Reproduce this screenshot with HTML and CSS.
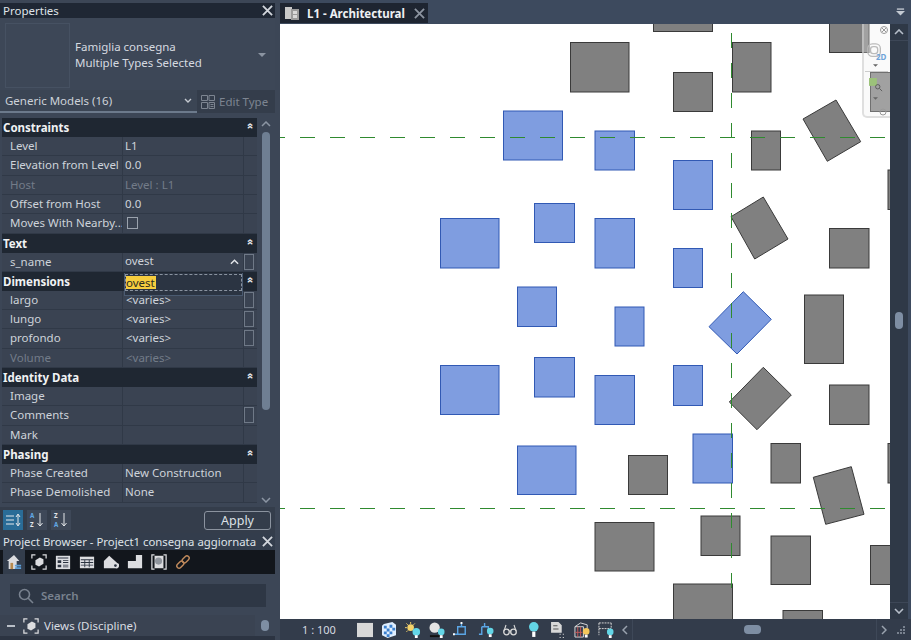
FILE: index.html
```html
<!DOCTYPE html>
<html lang="en">
<head>
<meta charset="utf-8">
<title>L1 - Architectural</title>
<link rel="stylesheet" href="styles.css">
</head>
<body>
<div class="app">
  <aside class="left">
    <header class="title props-title"><span>Properties</span>
      <svg class="close" viewBox="0 0 12 12"><path d="M1 1l10 10M11 1L1 11"/></svg>
    </header>
    <section class="selector">
      <div class="preview"></div>
      <div class="type-name"><div>Famiglia consegna</div><div>Multiple Types Selected</div></div>
      <svg class="sel-arrow" viewBox="0 0 8 4"><path d="M0 0h8L4 4z"/></svg>
    </section>
    <section class="filter">
      <div class="filter-sel"><span>Generic Models (16)</span>
        <svg class="chev-down" viewBox="0 0 8 5"><path d="M1 1l3 3 3-3"/></svg>
      </div>
      <div class="edit-type">
        <svg class="edit-icon" viewBox="0 0 14 14"><path d="M.5.5h6v5h-6zM.5 7.5h6v6h-6zM8 .5h5.500v5H8zM8 7.500h5.500v6H8zM9.500 9.500h3M9.500 11.500h3"/></svg>
        <span>Edit Type</span>
      </div>
    </section>
    <section class="grid-wrap">
      <div class="table">
        <div class="head"><span>Constraints</span><i class="dbl">»</i></div>
        <div class="row"><span>Level</span><span>L1</span><span></span></div>
        <div class="row"><span>Elevation from Level</span><span>0.0</span><span></span></div>
        <div class="row off"><span>Host</span><span>Level : L1</span><span></span></div>
        <div class="row"><span>Offset from Host</span><span>0.0</span><span></span></div>
        <div class="row"><span>Moves With Nearby...</span><span><b class="check"></b></span><span></span></div>
        <div class="head"><span>Text</span><i class="dbl">»</i></div>
        <div class="row"><span>s_name</span><span class="with-chev">ovest<svg class="chev-up" viewBox="0 0 10 6"><path d="M1 5l4-4 4 4"/></svg></span><span class="cell-btn"><b></b></span></div>
        <div class="head head-edit"><span>Dimensions</span><i class="dbl">»</i>
          <div class="editor"><div class="editor-in"><mark>ovest</mark></div></div>
        </div>
        <div class="row"><span>largo</span><span class="var">&lt;varies&gt;</span><span class="cell-btn"><b></b></span></div>
        <div class="row"><span>lungo</span><span class="var">&lt;varies&gt;</span><span class="cell-btn"><b></b></span></div>
        <div class="row"><span>profondo</span><span class="var">&lt;varies&gt;</span><span class="cell-btn"><b></b></span></div>
        <div class="row off"><span>Volume</span><span class="var">&lt;varies&gt;</span><span></span></div>
        <div class="head"><span>Identity Data</span><i class="dbl">»</i></div>
        <div class="row"><span>Image</span><span></span><span></span></div>
        <div class="row"><span>Comments</span><span></span><span class="cell-btn"><b></b></span></div>
        <div class="row"><span>Mark</span><span></span><span></span></div>
        <div class="head"><span>Phasing</span><i class="dbl">»</i></div>
        <div class="row"><span>Phase Created</span><span>New Construction</span><span></span></div>
        <div class="row"><span>Phase Demolished</span><span>None</span><span></span></div>
      </div>
      <div class="grid-scroll">
        <svg class="sc-arrow" viewBox="0 0 10 6"><path d="M1 5l4-4 4 4"/></svg>
        <div class="grid-track"><div class="grid-thumb"></div></div>
        <svg class="sc-arrow" viewBox="0 0 10 6"><path d="M1 1l4 4 4-4"/></svg>
      </div>
    </section>
    <section class="prop-tools">
      <button class="sort active"><svg viewBox="0 0 16 14"><path d="M1 3h8M1 7h8M1 11h8M13 2v10M11 4l2-3 2 3M11 10l2 3 2-3"/></svg></button>
      <button class="sort"><svg viewBox="0 0 16 16"><text x="1" y="6" class="az blue-l">A</text><text x="1" y="14.500" class="az">Z</text><path d="M11 1v13M8.500 11l2.500 3 2.500-3"/></svg></button>
      <button class="sort"><svg viewBox="0 0 16 16"><text x="1" y="6" class="az">Z</text><text x="1" y="14.500" class="az blue-l">A</text><path d="M11 1v13M8.500 11l2.500 3 2.500-3"/></svg></button>
      <button class="apply">Apply</button>
    </section>
    <header class="title browser-title"><span>Project Browser - Project1 consegna aggiornata</span>
      <svg class="close" viewBox="0 0 12 12"><path d="M1 1l10 10M11 1L1 11"/></svg>
    </header>
    <nav class="browser-tabs">
      <span class="b-tab on"><svg viewBox="0 0 18 18"><path class="ic-w" d="M9 1L1 8h2v9h9V8h3z"/><path class="ic-o" d="M5 10h3v7H5z"/><path class="ic-b" d="M10 12h7v2h-7zM10 15h7v2h-7z"/></svg></span>
      <span class="b-tab"><svg viewBox="0 0 18 18"><path class="ic-l" d="M1 5V1h4M13 1h4v4M17 13v4h-4M5 17H1v-4"/><path class="ic-w" d="M5 7l5-3 4 2v5l-5 3-4-2z"/></svg></span>
      <span class="b-tab"><svg viewBox="0 0 18 18"><path class="ic-w" d="M1 2h16v15H1z"/><path class="ic-d" d="M3 4h12v1H3zM3 7h4v3H3zM9 7h6v1H9zM9 9h6v1H9zM3 12h4v3H3zM9 12h6v1H9zM9 14h6v1H9z"/></svg></span>
      <span class="b-tab"><svg viewBox="0 0 18 16"><path class="ic-w" d="M1 2h16v13H1z"/><path class="ic-d" d="M2 5h14v1H2zM2 8h14v1H2zM2 11h14v1H2zM6 5h1v9H6zM11 5h1v9h-1z"/></svg></span>
      <span class="b-tab"><svg viewBox="0 0 18 18"><path class="ic-w" d="M1 8l6-6 9 8a3 3 0 0 1-2 6H1z"/><circle class="ic-d" cx="14" cy="13" r="1.500"/></svg></span>
      <span class="b-tab"><svg viewBox="0 0 18 18"><path class="ic-w" d="M10 1h7v15H1V8h9z"/></svg></span>
      <span class="b-tab"><svg viewBox="0 0 18 18"><path class="ic-l" d="M4 1H1v16h3M14 1h3v16h-3"/><path class="ic-w" d="M4 2h10v14H4z"/><circle class="ic-g" cx="8.500" cy="8" r="4"/></svg></span>
      <span class="b-tab"><svg viewBox="0 0 18 18"><g class="ic-link"><rect x="1.500" y="9.500" width="9" height="5" rx="2.500" transform="rotate(-45 6 12)"/><rect x="7.500" y="3.500" width="9" height="5" rx="2.500" transform="rotate(-45 12 6)"/></g></svg></span>
    </nav>
    <div class="search-wrap">
      <div class="search">
        <svg viewBox="0 0 16 16"><circle cx="6.500" cy="6.500" r="5"/><path d="M10 10l5 5"/></svg>
        <span>Search</span>
      </div>
    </div>
    <div class="tree">
      <div class="tree-row">
        <span class="minus"></span>
        <svg class="tree-ic" viewBox="0 0 18 18"><path class="ic-l" d="M1 5V1h4M13 1h4v4M17 13v4h-4M5 17H1v-4"/><path class="ic-w" d="M5 7l5-3 4 2v5l-5 3-4-2z"/></svg>
        <span>Views (Discipline)</span>
      </div>
      <div class="tree-scroll"><div class="tree-thumb"></div></div>
    </div>
  </aside>

  <main class="right">
    <div class="tabbar">
      <div class="tab">
        <svg class="tab-ic" viewBox="0 0 14 14"><path d="M0 1h7v12H0z" fill="#c9c9c9"/><path d="M6 3h8v11H6z" fill="#9b9b9b"/><path d="M8 5h4v3H8zM8 9h4v3H8z" fill="#d9d9d9"/></svg>
        <span class="tab-label">L1 - Architectural</span>
        <svg class="close tab-close" viewBox="0 0 12 12"><path d="M1 1l10 10M11 1L1 11"/></svg>
      </div>
      <svg class="tab-menu" viewBox="0 0 10 8"><path d="M1 0h8v1.500H1z"/><path d="M0 3h10L5 8z"/></svg>
    </div>
    <div class="view">
      <div class="canvas">
        <svg class="drawing" viewBox="280 24 610 595" width="610" height="595">
          <g class="g">
            <rect x="570.500" y="42.500" width="58.500" height="49.500"/>
            <rect x="653.500" y="10" width="59" height="21.500"/>
            <rect x="673.500" y="72.500" width="39" height="39"/>
            <rect x="732.500" y="42.500" width="38.500" height="49.500"/>
            <rect x="829.500" y="10" width="39.500" height="42.500"/>
            <rect x="751.500" y="131" width="29" height="39"/>
            <polygon points="836,100 860.700,141.700 827.300,161.300 803,119"/>
            <polygon points="763.300,197 788,239 754.700,259 731,216.700"/>
            <rect x="829.500" y="228.500" width="39.500" height="39.500"/>
            <rect x="804.500" y="295" width="39" height="68.500"/>
            <polygon points="763.300,367.300 791.300,395 757,429.700 729.300,402"/>
            <rect x="829.500" y="385" width="39.500" height="39.500"/>
            <rect x="771" y="443.500" width="29.500" height="39.500"/>
            <rect x="628.500" y="455.500" width="39" height="39"/>
            <polygon points="851.300,466.700 864,514.300 825.700,524.300 813.300,477.300"/>
            <rect x="888" y="170" width="20" height="39.500"/>
            <rect x="888" y="443.500" width="20" height="39.500"/>
            <rect x="595" y="522.500" width="59" height="48.500"/>
            <rect x="701" y="516" width="39" height="39.500"/>
            <rect x="771" y="536" width="39.500" height="48.500"/>
            <rect x="870.500" y="545.500" width="30" height="39"/>
            <rect x="673.500" y="584" width="59" height="50"/>
            <rect x="783" y="610.500" width="39.500" height="30"/>
            <rect x="870.500" y="72.500" width="39" height="39"/>
          </g>
          <g class="b">
            <rect x="503.500" y="111" width="59" height="49"/>
            <rect x="595" y="131" width="39.500" height="39"/>
            <rect x="673.500" y="160.500" width="39" height="49"/>
            <rect x="534.500" y="203.500" width="40" height="39"/>
            <rect x="440.500" y="218.500" width="58.500" height="49.500"/>
            <rect x="595" y="218.500" width="39.500" height="49.500"/>
            <rect x="673.500" y="248.500" width="29" height="39"/>
            <rect x="517.500" y="287" width="39" height="39.500"/>
            <rect x="615" y="307" width="29" height="39"/>
            <rect x="440.500" y="365.500" width="58.500" height="49"/>
            <rect x="534.500" y="357.500" width="40" height="39.500"/>
            <rect x="595" y="375.500" width="39.500" height="49"/>
            <rect x="673.500" y="365.500" width="29" height="40"/>
            <rect x="517.500" y="446" width="58.500" height="48.500"/>
            <rect x="693" y="434" width="39.500" height="49"/>
            <polygon points="743.300,291.700 771.300,319.300 737,354 709,326.700"/>
          </g>
          <g class="dash">
            <path d="M270 137.500h15m15 0h15m15 0h15m15 0h15m15 0h15m15 0h15m15 0h15m15 0h15m15 0h15m15 0h15m15 0h15m15 0h15m15 0h15m15 0h15m15 0h15m15 0h15m15 0h15m15 0h15m15 0h15m15 0h15m15 0h15"/>
            <path d="M270 508.500h15m15 0h15m15 0h15m15 0h15m15 0h15m15 0h15m15 0h15m15 0h15m15 0h15m15 0h15m15 0h15m15 0h15m15 0h15m15 0h15m15 0h15m15 0h15m15 0h15m15 0h15m15 0h15m15 0h15m15 0h15"/>
            <path d="M731.500 33v15m0 15v15m0 15v15m0 15v15m0 15v15m0 15v15m0 15v15m0 15v15m0 15v15m0 15v15m0 15v15m0 15v15m0 15v15m0 15v15m0 15v15m0 15v15m0 15v15m0 15v15m0 15v15"/>
          </g>
        </svg>
        <div class="navbar">
          <svg class="nav-x" viewBox="0 0 8 8"><circle cx="4" cy="4" r="3.500"/><path d="M2 2l4 4M6 2L2 6"/></svg>
          <svg class="nav-wheel" viewBox="0 0 18 18"><rect x="1" y="1" width="14" height="14" rx="5"/><rect x="4" y="4" width="8" height="8" rx="3"/></svg>
          <span class="nav-2d">2D</span>
          <svg class="nav-down" viewBox="0 0 6 3"><path d="M0 0h6L3 3z"/></svg>
          <div class="nav-sep"></div>
          <svg class="nav-zoom" viewBox="0 0 16 16"><path d="M0 0h9v9H0z" fill="#9cc27a"/><circle cx="10" cy="10" r="2.500" fill="none" stroke="#555"/><path d="M12 12l3 3" stroke="#555"/></svg>
          <svg class="nav-down low" viewBox="0 0 6 3"><path d="M0 0h6L3 3z"/></svg>
          <svg class="nav-o" viewBox="0 0 8 8"><circle cx="4" cy="4" r="3"/></svg>
        </div>
      </div>
      <div class="vscroll">
        <div class="vbtn top"><svg viewBox="0 0 10 6"><path d="M1 5l4-4 4 4"/></svg></div>
        <div class="vtrack"><div class="vthumb"></div></div>
        <div class="vbtn bottom"><svg viewBox="0 0 10 6"><path d="M1 1l4 4 4-4"/></svg></div>
      </div>
    </div>
    <footer class="status">
      <span class="scale">1 : 100</span>
      <div class="status-icons">
        <svg viewBox="0 0 17 17"><rect x="0" y="1" width="17" height="15" fill="#d8d8d8"/></svg>
        <svg viewBox="0 0 15 17"><path d="M2 2l9-2 4 3v11l-9 3-6-3V4z" fill="#dfeeff"/><path d="M2 4h3v3H2zM8 3h3v3H8zM5 7h3v3H5zM11 6h3v3h-3zM2 10h3v3H2zM8 10h3v3H8zM5 13h3v3H5z" fill="#3a80d0"/></svg>
        <svg viewBox="0 0 17 17"><circle cx="6" cy="6" r="3.500" fill="#f5d36a"/><path d="M6 0v2M0 6h2M1.500 1.500l1.500 1.500M10.500 1.500L9 3M1.500 10.500L3 9" stroke="#f5d36a"/><circle cx="12" cy="10.500" r="4" fill="#63d5e6"/><path d="M10.500 14h3v3h-3z" fill="#fff"/></svg>
        <svg viewBox="0 0 17 17"><circle cx="6" cy="6" r="5.500" fill="#e4e4e4"/><path d="M1 14h11v2H1z" fill="#111"/><circle cx="13" cy="10.500" r="3.500" fill="#63d5e6"/><path d="M11.500 14h3v3h-3z" fill="#fff"/></svg>
        <svg viewBox="0 0 17 17"><path d="M5 5h8v8H5zM1 13h4M9 1v4" fill="none" stroke="#5ba6e6" stroke-width="1.500"/><path d="M0 12h2v2H0zM8 0h2v2H8z" fill="#fff"/></svg>
        <svg viewBox="0 0 17 17"><path d="M4 5h7v8M1 13h3V5M7 1v4" fill="none" stroke="#5ba6e6" stroke-width="1.500"/><circle cx="13" cy="9.500" r="3.500" fill="#63d5e6"/><path d="M11.500 13h3v3h-3z" fill="#fff"/></svg>
        <svg class="small" viewBox="0 0 14 12"><circle cx="3.500" cy="8" r="2.800" fill="none" stroke="#d8d8d8" stroke-width="1.300"/><circle cx="10.500" cy="8" r="2.800" fill="none" stroke="#d8d8d8" stroke-width="1.300"/><path d="M6 7h2M1 7l2-6M13 7l-2-6" stroke="#d8d8d8" stroke-width="1.100"/></svg>
        <svg viewBox="0 0 9 15"><circle cx="4.500" cy="4.500" r="4.500" fill="#63d5e6"/><path d="M3 9h3v5H3z" fill="#fff"/></svg>
        <svg viewBox="0 0 14 15"><path d="M1 0h7l3 3v7H1z" fill="#d8d8d8"/><path d="M3 3h4v1H3zM3 6h5v1H3z" fill="#555"/><path d="M9 11h1v1H9zM12 11h1v1h-1zM9 14h1v1H9zM12 14h1v1h-1z" fill="#ddd"/></svg>
        <svg viewBox="0 0 17 17"><path d="M1 5l6-4 7 2v4" fill="none" stroke="#ddd"/><path d="M1 5h9v11H1z" fill="none" stroke="#ddd"/><path d="M1 11h8M4 5v11M7 5v11" fill="none" stroke="#c85a5a"/><circle cx="13" cy="10" r="3.500" fill="#f4c65a"/><path d="M11.500 13.500h3v3h-3z" fill="#fff"/></svg>
        <svg viewBox="0 0 17 17"><path d="M1 1h13M1 7h13M1 1v13M14 1v6" fill="none" stroke="#ddd" stroke-dasharray="2 1"/><circle cx="13" cy="10.500" r="3.500" fill="#63d5e6"/><path d="M11.500 14h3v3h-3z" fill="#fff"/></svg>
      </div>
      <div class="hscroll">
        <svg class="hbtn" viewBox="0 0 6 10"><path d="M5 1L1 5l4 4"/></svg>
        <div class="htrack"><div class="hthumb"></div></div>
        <svg class="hbtn" viewBox="0 0 6 10"><path d="M1 1l4 4-4 4"/></svg>
      </div>
      <svg class="grip" viewBox="0 0 8 8"><path d="M6 0h2v2H6zM3 3h2v2H3zM6 3h2v2H6zM0 6h2v2H0zM3 6h2v2H3zM6 6h2v2H6z"/></svg>
    </footer>
  </main>
</div>
</body>
</html>
```
FILE: styles.css
```css
* { box-sizing: border-box; }
html, body { margin: 0; padding: 0; }
body {
  width: 911px;
  height: 640px;
  overflow: hidden;
  background: #3c4656;
  font-family: "Noto Sans", "Liberation Sans", sans-serif;
  font-size: 11.500px;
  color: #d6dae0;
}
svg { display: block; }
.app { display: flex; width: 911px; height: 640px; }

/* left column */
.left { width: 275px; height: 640px; display: flex; flex-direction: column; background: #3c4656; }
.title {
  display: flex;
  align-items: center;
  justify-content: space-between;
  color: #dfe3e8;
  padding: 0 2px 0 3px;
  white-space: nowrap;
}
.props-title { height: 15px; margin-top: 3px; background: #1f2734; }
.browser-title { height: 17px; background: #333d4c; font-size: 11.350px; }
.close { width: 11px; height: 11px; flex: none; fill: none; stroke: #d2d6dc; stroke-width: 2; }
.selector {
  height: 72px;
  display: flex;
  align-items: center;
  position: relative;
  padding: 4px 9px 2px 5px;
  background: #3d4757;
}
.preview { width: 65px; height: 65px; border: 1px solid #465162; margin-right: 5px; flex: none; }
.type-name { flex: 1; line-height: 16px; color: #d6dae0; }
.sel-arrow { width: 8px; height: 4px; fill: #8b94a1; }
.filter { height: 23px; display: flex; }
.filter-sel {
  width: 197px;
  display: flex;
  align-items: center;
  justify-content: space-between;
  padding: 0 5px;
  border-bottom: 2px solid #6c7a8c;
  background: #3b4554;
  color: #cdd2d9;
}
.chev-down { width: 8px; height: 5px; fill: none; stroke: #c5cad1; stroke-width: 1.400; }
.edit-type {
  flex: 1;
  display: flex;
  align-items: center;
  gap: 4px;
  padding-left: 4px;
  background: #343d4b;
  color: #7d8591;
}
.edit-icon { width: 14px; height: 14px; fill: none; stroke: #7d8591; }
.grid-wrap { display: flex; height: 389px; margin-top: 5px; padding-left: 2px; }
.table { width: 255px; height: 385px; }
.head {
  height: 18.900px;
  display: flex;
  align-items: center;
  justify-content: space-between;
  background: #1f2732;
  color: #f0f2f4;
  font-weight: 700;
  padding: 0 5px 0 1px;
  position: relative;
  line-height: 19px;
}
.dbl {
  font-style: normal;
  font-weight: 700;
  font-size: 10px;
  line-height: 10px;
  color: #e4e7eb;
  transform: rotate(-90deg);
  margin-top: -3px;
}
.row {
  height: 19.350px;
  display: grid;
  grid-template-columns: 121px 121px 13px;
  border-bottom: 1px solid #303947;
  background: #3a4352;
  color: #ced3da;
  line-height: 18.400px;
}
.row > span { display: block; white-space: nowrap; overflow: hidden; }
.row > span:first-child { padding-left: 8px; border-right: 1px solid #303947; }
.row > span:nth-child(2) { padding-left: 2px; border-right: 1px solid #303947; }
.off { color: #737c89; }
.var { padding-left: 3px !important; }
.with-chev { display: flex !important; align-items: center; justify-content: space-between; padding-right: 4px; }
.chev-up { width: 9px; height: 6px; fill: none; stroke: #e2e5e9; stroke-width: 1.600; }
.check { display: block; width: 11px; height: 12px; margin: 3px 0 0 2px; border: 1px solid #9aa2ad; }
.cell-btn b { display: block; width: 10px; height: 16px; margin: 1px 0 0 0; border: 1px solid #6f7987; }
.editor {
  position: absolute;
  left: 122px;
  top: 1px;
  width: 119px;
  height: 23px;
  z-index: 2;
  padding: 1px 0 4px;
  background: #2b3442;
  border: 1px solid #4a5a70;
  border-top: 0;
}
.editor-in { height: 17px; border: 1px dashed #8a93a0; display: flex; align-items: center; font-weight: 400; }
mark { background: #f6cd3e; color: #2a2a20; line-height: 13px; padding: 0 1px 0 0; }
.grid-scroll { width: 18px; display: flex; flex-direction: column; align-items: center; background: #3c4656; height: 385px; padding-top: 3px; }
.sc-arrow { width: 10px; height: 6px; fill: none; stroke: #8b95a3; stroke-width: 1.500; flex: none; }
.grid-track { flex: 1; width: 100%; padding: 5px 5px 0; }
.grid-thumb { width: 8px; height: 278px; border-radius: 4px; background: #6f7f93; }
.prop-tools { height: 26px; display: flex; align-items: center; padding: 0 4px 0 3px; gap: 4px; background: #343d4b; }
.sort {
  width: 20px;
  height: 20px;
  padding: 2px;
  border: 0;
  background: #3e4858;
  display: flex;
  align-items: center;
  justify-content: center;
}
.sort svg { width: 16px; height: 16px; fill: none; stroke: #e4e7ea; overflow: visible; }
.sort.active { background: #2a6c97; }
.az { font: 700 6.200px "Noto Sans", sans-serif; fill: #e4e7ea; stroke: none; }
.blue-l { fill: #62a8e6; }
.apply {
  margin-left: auto;
  width: 67px;
  height: 19px;
  border: 1px solid #8b939f;
  border-radius: 3px;
  background: #343d4b;
  color: #dde1e6;
  font: 12.500px "Noto Sans", sans-serif;
  padding: 0;
}
.browser-tabs {
  height: 24px;
  display: flex;
  align-items: center;
  padding-left: 3px;
  gap: 4px;
  background: #12161c;
}
.b-tab { width: 20px; height: 24px; display: flex; align-items: center; justify-content: center; }
.b-tab.on { background: #333d4c; width: 22px; }
.b-tab svg { width: 16px; height: 16px; }
.ic-w { fill: #dcdde0; }
.ic-d { fill: #2b3340; }
.ic-o { fill: #b78a4e; }
.ic-b { fill: #5d9fd8; }
.ic-g { fill: #8f959d; }
.ic-l { fill: none; stroke: #dcdde0; stroke-width: 1.400; }
.ic-link { fill: none; stroke: #c08a5c; stroke-width: 1.600; }
.search-wrap { height: 41px; padding: 10px 9px 8px 10px; background: #3c4656; }
.search {
  height: 23px;
  display: flex;
  align-items: center;
  gap: 7px;
  padding-left: 8px;
  background: #2e3745;
  color: #79828f;
  font-weight: 600;
}
.search svg { width: 16px; height: 16px; fill: none; stroke: #79828f; stroke-width: 1.600; }
.tree { flex: 1; display: flex; background: #2c3442; }
.tree-row {
  width: 255px;
  height: 21px;
  display: flex;
  align-items: center;
  padding-left: 7px;
  background: #3a4352;
  color: #d8dce1;
}
.minus { width: 8px; height: 2px; background: #b9bfc7; margin-right: 8px; }
.tree-ic { width: 16px; height: 16px; margin-right: 5px; }
.tree-scroll { flex: 1; background: #3c4656; height: 21px; padding: 5px 0 0 6px; }
.tree-thumb { width: 8px; height: 11px; border-radius: 4px; background: #7e8ea3; }

/* right column */
.right { width: 631px; margin-left: 5px; display: flex; flex-direction: column; }
.tabbar {
  height: 24px;
  padding-top: 3px;
  display: flex;
  align-items: flex-start;
  justify-content: space-between;
  background: #3d4a5e;
}
.tab {
  width: 148px;
  height: 20px;
  display: flex;
  align-items: center;
  padding-left: 5px;
  background: #1e2531;
  color: #eef0f3;
  font-weight: 700;
  white-space: nowrap;
}
.tab-ic { width: 14px; height: 14px; margin-right: 8px; flex: none; }
.tab-label { flex: none; width: 99px; }
.tab-close { margin-left: 8px; stroke: #8c94a0; }
.tab-menu { width: 9px; height: 8px; fill: #c4cad2; margin: 5px 6px 0 0; }
.view { height: 595px; display: flex; }
.canvas { width: 610px; height: 595px; position: relative; background: #fff; overflow: hidden; }
.drawing { display: block; }
.g { fill: #808080; stroke: #3a3a3a; stroke-width: 1; }
.b { fill: #7f9de0; stroke: #3159b4; stroke-width: 1; }
.dash { fill: none; stroke: #2f8a2f; stroke-width: 1; }
.navbar {
  position: absolute;
  right: 0;
  top: 0;
  width: 28px;
  height: 94px;
  display: flex;
  flex-direction: column;
  align-items: flex-start;
  padding-top: 2px;
  border: 2px solid rgba(205, 205, 205, .6);
  border-right: 0;
  border-top: 0;
  border-radius: 0 0 0 5px;
  background: rgba(240, 240, 240, .3);
}
.nav-x { width: 8px; height: 8px; fill: none; stroke: #999; margin-left: 16px; flex: none; }
.nav-wheel { width: 16px; height: 16px; fill: none; stroke: #bbb; stroke-width: 1.500; margin: 9px 0 0 3px; flex: none; }
.nav-2d { font-size: 8px; line-height: 8px; color: #6fa3d8; font-weight: 700; margin: -6px 0 0 12px; flex: none; }
.nav-down { width: 5px; height: 3px; fill: #666; margin: 3px 0 0 9px; flex: none; }
.nav-down.low { margin-top: 5px; }
.nav-sep { width: 23px; height: 1px; background: #ccc; margin: 4px 0 0 1px; flex: none; }
.nav-zoom { width: 14px; height: 14px; margin: 6px 0 0 5px; flex: none; }
.nav-o { width: 8px; height: 8px; fill: none; stroke: #999; margin: 8px 0 0 15px; flex: none; }
.vscroll { flex: 1; display: flex; flex-direction: column; background: #2f3947; border-right: 3px solid #3d4a5e; }
.vbtn { height: 17px; display: flex; align-items: center; justify-content: center; }
.vbtn.top { border-bottom: 1px solid #3d4757; }
.vbtn.bottom { border-top: 1px solid #3d4757; }
.vbtn svg { width: 10px; height: 6px; fill: none; stroke: #b6bec9; stroke-width: 1.600; }
.vtrack { flex: 1; padding: 271px 0 0 5px; }
.vthumb { width: 8px; height: 17px; border-radius: 4px; background: #7e8ea3; }
.status { flex: 1; display: flex; align-items: center; background: #333c4b; }
.scale { width: 73px; padding-left: 22px; color: #d6dae0; font-size: 11px; flex: none; }
.status-icons { display: grid; grid-template-columns: repeat(11, 24.100px); align-items: center; justify-items: center; width: 265px; flex: none; }
.status-icons svg { height: 16px; width: auto; }
.status-icons svg.small { height: 12px; }
.hscroll { width: 269px; display: flex; align-items: center; flex: none; padding-left: 4px; }
.hbtn { width: 6px; height: 10px; fill: none; stroke: #9aa3af; stroke-width: 1.500; flex: none; }
.htrack { flex: 1; height: 21px; margin: 0 4px; padding: 6px 0 0 111px; border-left: 1px solid #3e4858; border-right: 1px solid #3e4858; }
.hthumb { width: 17px; height: 9px; border-radius: 4px; background: #7e8ea3; }
.grip { width: 8px; height: 8px; fill: #79828f; margin-left: 10px; flex: none; }
```
